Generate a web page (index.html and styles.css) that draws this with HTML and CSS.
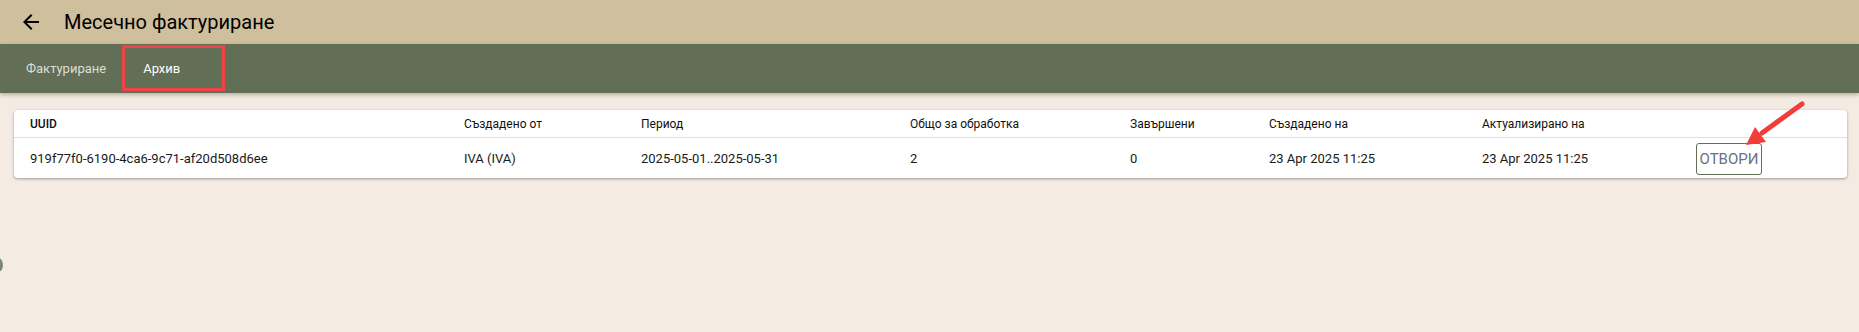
FILE: index.html
```html
<!DOCTYPE html>
<html lang="bg">
<head>
    <meta charset="UTF-8">
    <meta name="viewport" content="width=device-width, initial-scale=1.0">
    <title>Месечно фактуриране</title>
    <link rel="stylesheet" href="styles.css">
</head>
<body>
    <header class="toolbar">
        <button class="back" aria-label="Назад">
            <svg width="24" height="24" viewBox="0 0 24 24"><path d="M20 11H7.83l5.59-5.59L12 4l-8 8 8 8 1.41-1.41L7.83 13H20v-2z" fill="#000"/></svg>
        </button>
        <h1 class="title">Месечно фактуриране</h1>
    </header>
    <nav class="tabs">
        <a class="tab">Фактуриране</a>
        <a class="tab active">Архив</a>
    </nav>

    <main class="content">
        <div class="card">
            <div class="row head">
                <div>UUID</div>
                <div>Създадено от</div>
                <div>Период</div>
                <div>Общо за обработка</div>
                <div>Завършени</div>
                <div>Създадено на</div>
                <div>Актуализирано на</div>
                <div></div>
            </div>
            <div class="row body">
                <div>919f77f0-6190-4ca6-9c71-af20d508d6ee</div>
                <div>IVA (IVA)</div>
                <div>2025-05-01..2025-05-31</div>
                <div>2</div>
                <div>0</div>
                <div>23 Apr 2025 11:25</div>
                <div>23 Apr 2025 11:25</div>
                <div><button class="open">ОТВОРИ</button></div>
            </div>
        </div>
    </main>

    <div class="side-dot"></div>

    <!-- червена стрелка към бутона -->
    <svg class="pointer" width="75" height="52" viewBox="0 0 75 52">
        <line x1="64" y1="6" x2="24" y2="35" stroke="#f23d3d" stroke-width="5" stroke-linecap="round"/>
        <polygon points="8,47 17,29 28,44" fill="#f23d3d"/>
    </svg>
</body>
</html>
```

FILE: styles.css
```css
body {
    margin: 0;
    padding: 0;
    font-family: Roboto, "Liberation Sans", Arial, sans-serif;
    background: #f4ebe2;
    min-height: 332px;
    overflow: hidden;
}
.toolbar {
    height: 44px;
    background: #cfbf9c;
    display: flex;
    align-items: center;
}
.back {
    background: none;
    border: none;
    padding: 0;
    margin-left: 19px;
    width: 24px;
    height: 24px;
    cursor: pointer;
}
.title {
    margin: 0 0 0 21px;
    font-size: 20px;
    font-weight: 400;
    color: #000;
}
.tabs {
    height: 49px;
    background: #626e56;
    display: flex;
    box-shadow: 0 2px 4px rgba(0, 0, 0, 0.25);
    position: relative;
}
.tab {
    display: flex;
    align-items: center;
    font-size: 13px;
    font-weight: 400;
    color: #dcdfd6;
    padding: 0 16px 0 26px;
}
.tab.active {
    color: #fff;
    padding: 0 42px 0 18px;
    margin: 1px 0 2px;
    border: 3px solid #f04345;
}
.content {
    padding: 17px 12px 0 14px;
}
.card {
    background: #fff;
    border-radius: 4px;
    box-shadow: 0 1px 3px rgba(0, 0, 0, 0.35);
}
.row {
    display: grid;
    grid-template-columns: 434px 177px 269px 220px 139px 213px 214px 1fr;
    padding: 0 16px;
    align-items: center;
    font-size: 13px;
    color: #1a1a1a;
}
.row.head {
    height: 27px;
    font-size: 12px;
    font-weight: 400;
    color: #111;
    border-bottom: 1px solid #e0e0e0;
}
.row.head div:first-child {
    font-weight: 500;
}
.row.body {
    height: 40px;
}
.open {
    font-family: Roboto, "Liberation Sans", Arial, sans-serif;
    font-size: 15px;
    font-weight: 400;
    color: #6b7180;
    background: #fff;
    border: 1px solid #626e56;
    border-radius: 3px;
    height: 32px;
    width: 66px;
    padding: 0;
    margin-top: 2px;
}
.side-dot {
    position: absolute;
    left: -7px;
    top: 258px;
    width: 10px;
    height: 14px;
    border-radius: 50%;
    background: #7d8574;
}
.pointer {
    position: absolute;
    left: 1738px;
    top: 98px;
}
```
